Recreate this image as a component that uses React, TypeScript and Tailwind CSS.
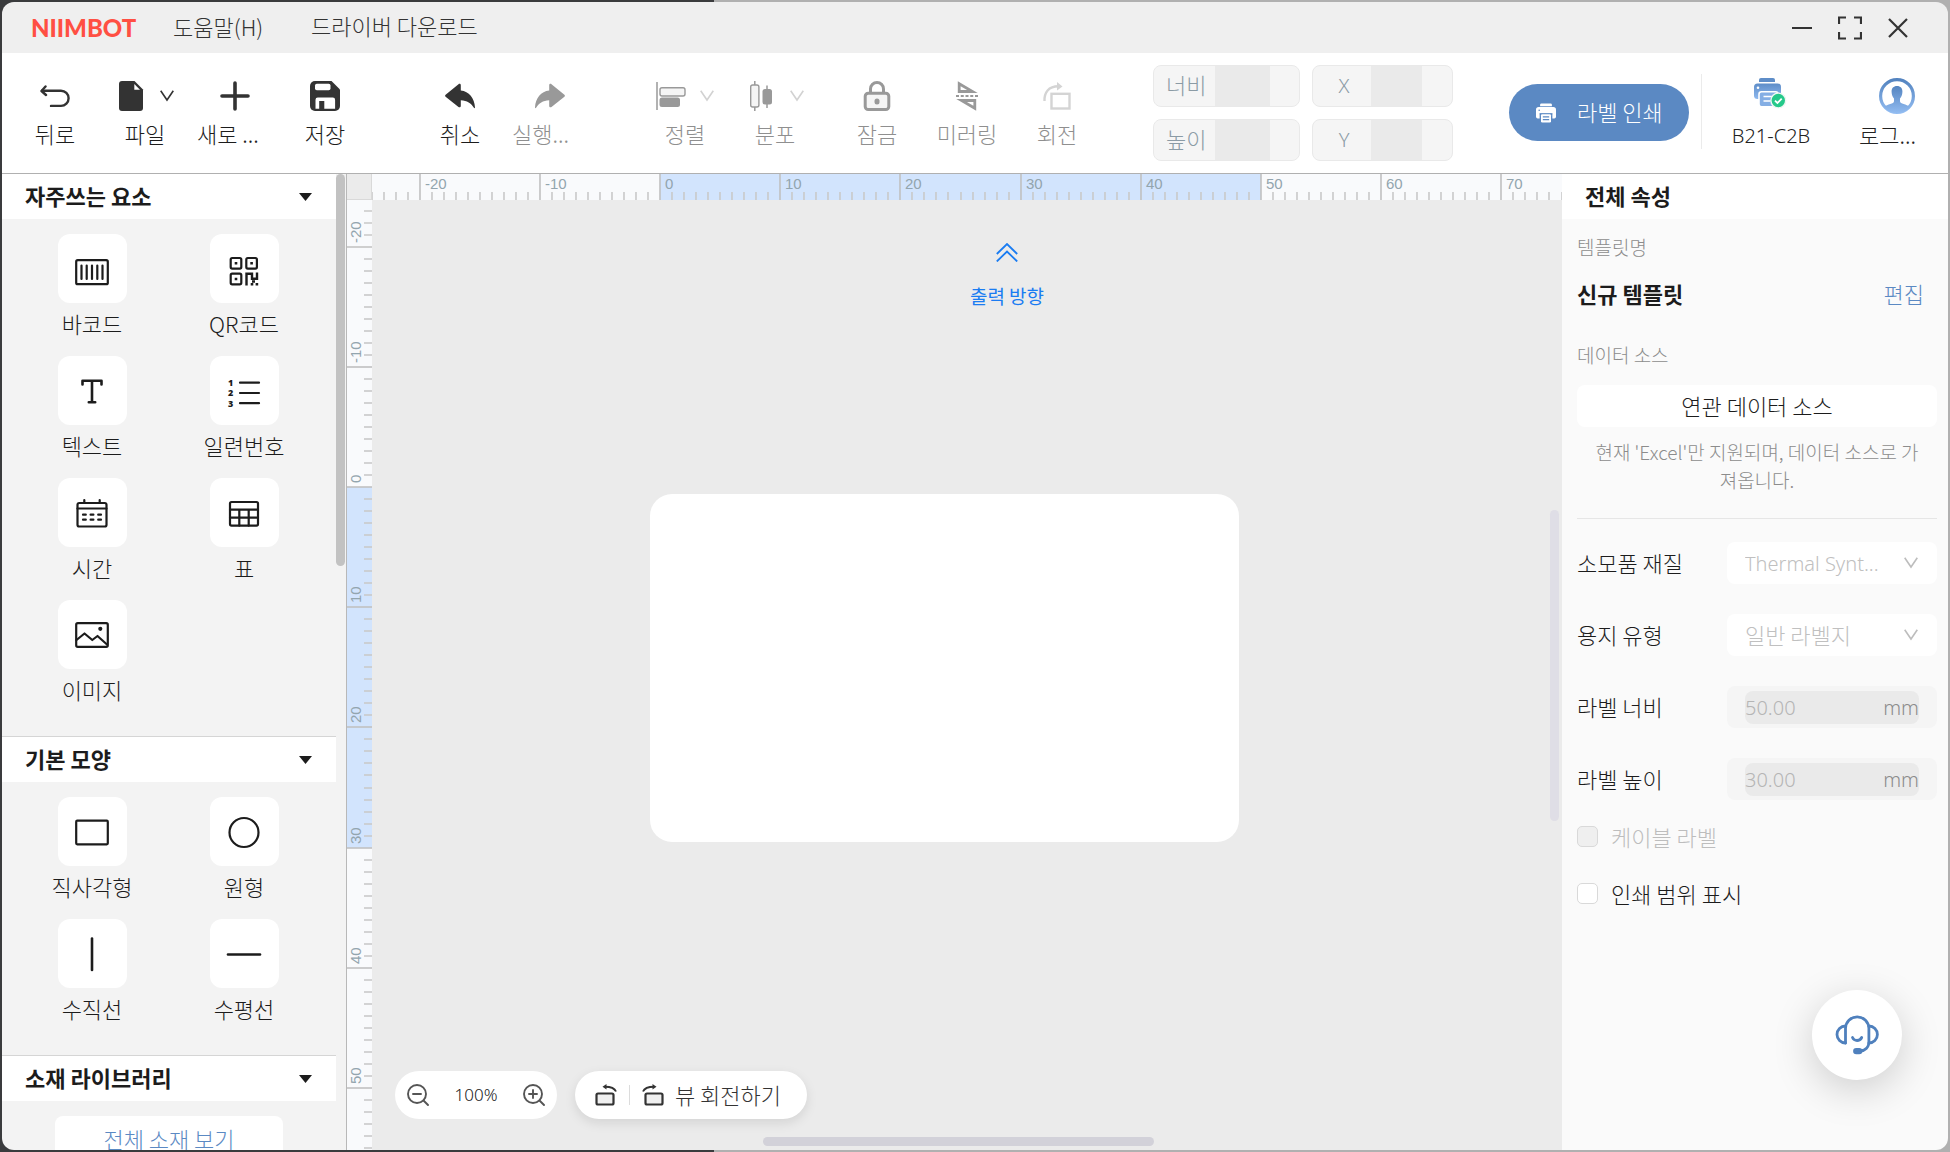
import type { ReactNode } from "react";

type IconProps = { className?: string };

const RULER_STEP = 12.02;

function BackIcon() {
  return (
    <svg width="30" height="30" viewBox="0 0 30 30" fill="none" stroke="currentColor" strokeWidth="2.4" strokeLinecap="round" strokeLinejoin="round">
      <path d="M5.5 5.5 1.5 10l4.5 4" />
      <path d="M2 9.7h19a7.6 7.6 0 0 1 0 15.2H11" />
    </svg>
  );
}

function FileIcon() {
  return (
    <svg width="30" height="30" viewBox="0 0 30 30" fill="currentColor">
      <path d="M6 0h12.5L27 8.5V27a3 3 0 0 1-3 3H6a3 3 0 0 1-3-3V3a3 3 0 0 1 3-3Z" />
      <path d="M18.3 3v5.7H24Z" fill="#fff" />
    </svg>
  );
}

function Chevron({ className }: IconProps) {
  return (
    <svg className={className} width="14" height="12" viewBox="0 0 14 12" fill="none" stroke="currentColor" strokeWidth="1.6">
      <path d="M.7.8 7 10 13.3.8" />
    </svg>
  );
}

function PlusIcon() {
  return (
    <svg width="30" height="30" viewBox="0 0 30 30" stroke="currentColor" strokeWidth="3.6" strokeLinecap="round">
      <path d="M15 2v26M2 15h26" />
    </svg>
  );
}

function SaveIcon() {
  return (
    <svg width="30" height="30" viewBox="0 0 30 30" fill="currentColor">
      <path d="M5 0h16.500L30 8.500V25a5 5 0 0 1-5 5H5a5 5 0 0 1-5-5V5a5 5 0 0 1 5-5Z" />
      <rect x="5" y="2.700" width="15.500" height="6.500" rx="1.800" fill="#fff" />
      <path d="M7.800 16.500h15a2.300 2.300 0 0 1 2.300 2.300v9H14.300V20H9.200v7.800H5.500v-9a2.300 2.300 0 0 1 2.300-2.300Z" fill="#fff" />
    </svg>
  );
}

function ReplyIcon({ className }: IconProps) {
  return (
    <svg className={className} width="30" height="30" viewBox="0 0 30 30" fill="currentColor">
      <path d="M13.500 3.200c1-.8 2.300-.2 2.300 1v5.400C24 10.500 29.500 17 30 26.600c0 .7-.8.8-1.100.2-2.600-4.700-6.800-7.300-13.100-7.600v5.800c0 1.200-1.300 1.800-2.300 1L.6 15.700a1.300 1.300 0 0 1 0-1.900Z" />
    </svg>
  );
}

function AlignIcon() {
  return (
    <svg width="30" height="30" viewBox="0 0 30 30" fill="none" stroke="currentColor">
      <path d="M1 1v28" strokeWidth="1.500" />
      <rect x="4" y="6.700" width="25" height="8.300" rx="2" fill="#f5f5f5" strokeWidth="1.400" />
      <rect x="3.500" y="16.500" width="20.500" height="9.500" rx="2.500" fill="currentColor" stroke="none" />
    </svg>
  );
}

function DistributeIcon() {
  return (
    <svg width="30" height="30" viewBox="0 0 30 30" fill="none" stroke="currentColor">
      <path d="M8.800 0v30M21 4.500v22.500" strokeWidth="1.500" />
      <rect x="4.700" y="4" width="8.200" height="22" rx="2" fill="#f5f5f5" strokeWidth="1.400" />
      <rect x="16.500" y="8" width="9.500" height="15.500" rx="2.500" fill="currentColor" stroke="none" />
    </svg>
  );
}

function LockIcon() {
  return (
    <svg width="30" height="30" viewBox="0 0 30 30" fill="none" stroke="currentColor" strokeWidth="3">
      <path d="M8.500 12V8a6.500 6.500 0 0 1 13 0v4" />
      <rect x="3.200" y="12.300" width="23.600" height="16.200" rx="3" fill="#f5f5f5" />
      <rect x="12.500" y="17.500" width="5" height="6" rx="2.500" fill="currentColor" stroke="none" />
    </svg>
  );
}

function MirrorIcon() {
  return (
    <svg width="30" height="30" viewBox="0 0 30 30" fill="none" stroke="currentColor" strokeWidth="2.800">
      <path d="M7.200 2.800v7.700h13.300Z" />
      <path d="M9.500 19.500h13.300v7.700Z" />
      <path d="M4 15h22" strokeWidth="2" strokeDasharray="3 1.750" />
    </svg>
  );
}

function RotateIcon() {
  return (
    <svg width="30" height="30" viewBox="0 0 30 30" fill="none" stroke="currentColor" strokeWidth="2.400">
      <path d="M2.500 20c-.4-8.500 4-14.700 14-14.700" />
      <path d="m15 1 5.500 4.500L15 9.500Z" fill="currentColor" stroke="none" />
      <rect x="9.500" y="12.800" width="18" height="14.700" />
    </svg>
  );
}

function PrintIcon() {
  return (
    <svg width="20" height="20" viewBox="0 0 22 21" fill="#fff">
      <path d="M6 0h10a1.500 1.500 0 0 1 1.500 1.500V3h-13V1.500A1.500 1.500 0 0 1 6 0Z" />
      <path d="M3 4h16a3 3 0 0 1 3 3v7.500a2 2 0 0 1-2 2h-2V11H4v5.500H2a2 2 0 0 1-2-2V7a3 3 0 0 1 3-3Z" />
      <rect x="5.500" y="11.500" width="11" height="9.500" rx="1.500" />
      <path d="M4 10.800h14v1H4ZM7.500 14.200h7v1.300h-7ZM7.500 17.200h7v1.300h-7Z" fill="#5b89c3" />
      <circle cx="3.500" cy="7.500" r=".9" fill="#5b89c3" />
    </svg>
  );
}

function DeviceIcon() {
  return (
    <svg width="36" height="36" viewBox="0 0 36 36">
      <defs>
        <linearGradient id="device" x1="0" y1="0" x2="0" y2="1">
          <stop offset="0" stopColor="#5e8dc8" />
          <stop offset="1" stopColor="#8fb9ef" />
        </linearGradient>
      </defs>
      <path d="M8 0h12a2 2 0 0 1 2 2v2H6V2a2 2 0 0 1 2-2Z" fill="#5e8dc8" />
      <rect x="1" y="5.500" width="27" height="15.500" rx="3.500" fill="url(#device)" />
      <circle cx="5" cy="9.700" r="1.300" fill="#fff" />
      <rect x="6" y="13.800" width="19" height="15" rx="2.500" fill="#84aee4" stroke="#fff" strokeWidth="1.600" />
      <path d="M10.500 18.500h10M10.500 23h7" stroke="#fff" strokeWidth="1.500" />
      <circle cx="25.300" cy="22.500" r="7.400" fill="#25c98a" stroke="#eef7f2" strokeWidth="1.400" />
      <path d="m22 22.700 2.400 2.300 4.300-4.300" fill="none" stroke="#fff" strokeWidth="1.800" />
    </svg>
  );
}

function AvatarIcon() {
  return (
    <svg width="36" height="36" viewBox="0 0 36 36">
      <defs>
        <linearGradient id="avatar" x1="0" y1="0" x2="0" y2="1">
          <stop offset="0" stopColor="#5484c0" />
          <stop offset="1" stopColor="#93bdf2" />
        </linearGradient>
        <clipPath id="avatar-clip">
          <circle cx="18" cy="18" r="17" />
        </clipPath>
      </defs>
      <circle cx="18" cy="18" r="16.400" fill="#fff" stroke="url(#avatar)" strokeWidth="3.200" />
      <path
        clipPath="url(#avatar-clip)"
        fill="url(#avatar)"
        d="M18 8c3.700 0 5.600 2.500 5.400 6-.1 2.900-1 5-2.400 6.500v2.800c0 2.800 6.500 2.700 10 5.700L28 36H8l-3-7c3.500-3 10-2.900 10-5.700v-2.800c-1.400-1.500-2.300-3.600-2.400-6.500C12.400 10.500 14.300 8 18 8Z"
      />
    </svg>
  );
}

function TileIcon({ children }: { children: ReactNode }) {
  return (
    <svg width="36" height="36" viewBox="0 0 36 36" fill="none" stroke="currentColor" strokeWidth="2.200" strokeLinecap="round" strokeLinejoin="round">
      {children}
    </svg>
  );
}

const elementTiles = [
  {
    label: "바코드",
    icon: (
      <TileIcon>
        <rect x="2.200" y="9.200" width="31.600" height="24" rx="1.500" />
        <path d="M7.500 14.500v13.500M12.700 14.500v13.500M18 14.500v13.500M23.300 14.500v13.500M28.500 14.500v13.500" />
      </TileIcon>
    ),
  },
  {
    label: "QR코드",
    icon: (
      <TileIcon>
        <rect x="4.700" y="7" width="10.600" height="10.600" rx="1.500" />
        <rect x="20.300" y="7" width="10.600" height="10.600" rx="1.500" />
        <rect x="4.700" y="22.700" width="10.600" height="10.600" rx="1.500" />
        <path d="M8.700 12.300h2.600M24.300 12.300h2.600M8.700 28h2.600" strokeLinecap="butt" strokeWidth="2.600" />
        <path d="M20.500 34.400V22.700h5.500v5h5V21.600M24.700 33.200h2.600M29.600 33.200h2.600M26 30.500h3" strokeLinecap="butt" strokeLinejoin="miter" strokeWidth="2.400" />
      </TileIcon>
    ),
  },
  {
    label: "텍스트",
    icon: (
      <TileIcon>
        <path d="M8.500 11.500V7.700h19v3.800M18 7.700v21.500M14.800 29.300h6.400" strokeWidth="2.600" />
      </TileIcon>
    ),
  },
  {
    label: "일련번호",
    icon: (
      <TileIcon>
        <path d="M14 9.700h19M14 20h19M14 30.200h19" />
        <g fill="currentColor" stroke="none" fontFamily="Open Sans" fontWeight="800" fontSize="9">
          <text x="2" y="12.500">1</text>
          <text x="2" y="23">2</text>
          <text x="2" y="33.500">3</text>
        </g>
      </TileIcon>
    ),
  },
  {
    label: "시간",
    icon: (
      <TileIcon>
        <rect x="3.500" y="8" width="29" height="23.500" rx="1.800" />
        <path d="M3.500 13.500h29M10.300 5v3M25.700 5v3" />
        <path d="M9 19.700h2.800M16.600 19.700h2.800M24.200 19.700H27M9 24.700h2.800M16.600 24.700h2.800M24.200 24.700H27" />
      </TileIcon>
    ),
  },
  {
    label: "표",
    icon: (
      <TileIcon>
        <rect x="4" y="7" width="28" height="23.600" rx="1.500" />
        <path d="M4 14.600h28M4 22.600h28M13.300 14.600v16M22.700 14.600v16" />
      </TileIcon>
    ),
  },
  {
    label: "이미지",
    icon: (
      <TileIcon>
        <rect x="2.200" y="6.200" width="31.600" height="23.600" rx="1.500" />
        <path d="m2.500 23 8-6.500 7.800 6.500 5.200-4 9.500 8.500" />
        <circle cx="26.300" cy="11.800" r="1" fill="currentColor" />
      </TileIcon>
    ),
  },
];

const shapeTiles = [
  {
    label: "직사각형",
    icon: (
      <TileIcon>
        <rect x="2.200" y="6.700" width="31.600" height="23.600" rx="1" />
      </TileIcon>
    ),
  },
  {
    label: "원형",
    icon: (
      <TileIcon>
        <circle cx="18" cy="18.500" r="14.500" />
      </TileIcon>
    ),
  },
  {
    label: "수직선",
    icon: (
      <TileIcon>
        <path d="M18 2.500v31.500" strokeWidth="2.600" />
      </TileIcon>
    ),
  },
  {
    label: "수평선",
    icon: (
      <TileIcon>
        <path d="M2 18.500h32" strokeWidth="2.600" />
      </TileIcon>
    ),
  },
];

function TitleBar() {
  return (
    <header className="flex h-[51px] shrink-0 items-center bg-[#efefef] pr-10 pl-[29px] text-[#333]">
      <span className="w-[142px] font-[Lato] text-[24px] font-black text-[#ff4f43]">NIIMBOT</span>
      <button className="w-[138px] pb-[2px] text-left">도움말(H)</button>
      <button className="pb-[5px]">드라이버 다운로드</button>
      <div className="ml-auto flex items-center gap-[26px]">
        <button aria-label="최소화">
          <svg width="20" height="24" viewBox="0 0 20 24" stroke="currentColor" strokeWidth="2.200">
            <path d="M0 12h20" />
          </svg>
        </button>
        <button aria-label="최대화">
          <svg width="24" height="24" viewBox="0 0 24 24" fill="none" stroke="currentColor" strokeWidth="2.200">
            <path d="M1 8V1.500h7M16 1.500h7V8M1 16v6.500h7M16 22.500h7V16" />
          </svg>
        </button>
        <button aria-label="닫기">
          <svg width="20" height="24" viewBox="0 0 20 24" stroke="currentColor" strokeWidth="2.200">
            <path d="m1 3 18 18M19 3 1 21" />
          </svg>
        </button>
      </div>
    </header>
  );
}

type ToolProps = {
  label: string;
  icon: ReactNode;
  menu?: boolean;
  disabled?: boolean;
  clipped?: boolean;
};

function Tool({ label, icon, menu, disabled, clipped }: ToolProps) {
  return (
    <button
      disabled={disabled}
      className={`flex w-[90px] flex-col items-center ${disabled ? "text-[#999]" : "text-[#333]"}`}
    >
      <span className="flex h-[30px] items-center gap-[14px]">
        {icon}
        {menu ? <Chevron className={disabled ? "text-[#d2d2d2]" : ""} /> : null}
      </span>
      <span className={`mt-2 leading-7 ${disabled ? "text-[#8f8f8f]" : "text-[#1c1c1c]"} ${clipped ? "w-[76px] text-left" : ""}`}>
        {label}
      </span>
    </button>
  );
}

function SizeField({ label, id }: { label: string; id: string }) {
  return (
    <div className="flex h-[42px] w-[147px] overflow-hidden rounded-lg border border-[#e9e9e9] bg-[#f5f5f5]">
      <label htmlFor={id} className="w-[61px] pl-3 leading-9 text-[#8b9ba5]">
        {label}
      </label>
      <input id={id} disabled className="w-[55px] bg-[#eaeaea]" />
    </div>
  );
}

function AxisField({ label, id }: { label: string; id: string }) {
  return (
    <div className="flex h-[42px] w-[141px] overflow-hidden rounded-lg border border-[#e9e9e9] bg-[#f5f5f5]">
      <label htmlFor={id} className="w-[58px] pl-1 text-center font-['Noto_Sans'] text-[20px] leading-10 text-[#8b9ba5]">
        {label}
      </label>
      <input id={id} disabled className="w-[51px] bg-[#eaeaea]" />
    </div>
  );
}

function Toolbar() {
  return (
    <div className="flex h-[121px] shrink-0 border-b border-[#b0b0b0] bg-white pr-[13px] pl-2">
      <div className="flex pt-[28px]">
        <Tool label="뒤로" icon={<BackIcon />} />
        <Tool label="파일" icon={<FileIcon />} menu />
        <Tool label="새로 ..." icon={<PlusIcon />} clipped />
        <Tool label="저장" icon={<SaveIcon />} />
      </div>
      <div className="ml-[45px] flex pt-[28px]">
        <Tool label="취소" icon={<ReplyIcon />} />
        <Tool label="실행..." icon={<ReplyIcon className="-scale-x-100" />} disabled clipped />
      </div>
      <div className="ml-[45px] flex pt-[28px]">
        <Tool label="정렬" icon={<AlignIcon />} menu disabled />
        <Tool label="분포" icon={<DistributeIcon />} menu disabled />
      </div>
      <div className="ml-3 flex pt-[28px]">
        <Tool label="잠금" icon={<LockIcon />} disabled />
        <Tool label="미러링" icon={<MirrorIcon />} disabled />
        <Tool
          label="회전"
          icon={
            <span className="text-[#d4d4d4]">
              <RotateIcon />
            </span>
          }
          disabled
        />
      </div>
      <div className="ml-[51px] grid grid-cols-[147px_141px] content-start gap-x-3 gap-y-3 pt-3">
        <SizeField label="너비" id="item-width" />
        <AxisField label="X" id="item-x" />
        <SizeField label="높이" id="item-height" />
        <AxisField label="Y" id="item-y" />
      </div>
      <div className="ml-auto flex">
        <button className="mt-[31px] flex h-[57px] w-[180px] items-center rounded-full bg-[#5b89c3] pl-[27px] text-white">
          <PrintIcon />
          <span className="ml-[21px] pb-[2px]">라벨 인쇄</span>
        </button>
        <div className="mt-[21px] ml-3 h-[75px] w-px bg-[#ebebeb]" />
        <button className="ml-6 flex w-[90px] flex-col items-center pt-[25px] text-[#222]">
          <DeviceIcon />
          <span className="mt-2 font-['Noto_Sans'] text-[20px] leading-7 whitespace-nowrap">B21-C2B</span>
        </button>
        <button className="ml-[43px] flex w-[76px] flex-col items-center pt-[25px] text-[#222]">
          <AvatarIcon />
          <span className="mt-[6px] w-full text-left leading-7">로그...</span>
        </button>
      </div>
    </div>
  );
}

function SectionHeader({ title }: { title: string }) {
  return (
    <h2>
      <button className="flex h-[45px] w-full items-center justify-between bg-white pr-6 pl-[23px] text-[#1c1c1c]">
        <span className="pb-[3px] font-bold">{title}</span>
        <svg width="13" height="8" viewBox="0 0 13 8" fill="currentColor">
          <path d="M0 0h13L6.500 8Z" />
        </svg>
      </button>
    </h2>
  );
}

function TileGrid({ tiles }: { tiles: { label: string; icon: ReactNode }[] }) {
  return (
    <div className="grid grid-cols-2 gap-y-[19px] pt-[15px] pr-4 pb-[33px] pl-[14px]">
      {tiles.map((tile) => (
        <button key={tile.label} className="flex flex-col items-center text-[#1c1c1c]">
          <span className="flex size-[69px] items-center justify-center rounded-xl bg-white">{tile.icon}</span>
          <span className="mt-[6px] leading-7">{tile.label}</span>
        </button>
      ))}
    </div>
  );
}

function Sidebar() {
  return (
    <aside className="flex w-[345px] shrink-0 border-r border-[#b8b8b8] bg-[#f3f3f3]">
      <div className="w-[334px] overflow-hidden">
        <SectionHeader title="자주쓰는 요소" />
        <TileGrid tiles={elementTiles} />
        <div className="border-t border-[#d5d5d5]" />
        <SectionHeader title="기본 모양" />
        <TileGrid tiles={shapeTiles} />
        <div className="border-t border-[#d5d5d5]" />
        <SectionHeader title="소재 라이브러리" />
        <div className="flex justify-center pt-[15px]">
          <button className="h-[48px] w-[228px] rounded-lg bg-white pb-[3px] text-[#5b89c3]">전체 소재 보기</button>
        </div>
      </div>
      <div className="h-[392px] w-[9px] rounded-full bg-[#c2c2c2]" />
    </aside>
  );
}

function rulerMarks(from: number, to: number) {
  return Array.from({ length: to - from + 1 }, (_, i) => from + i);
}

function TopRuler() {
  const at = (mm: number) => Math.round(288 + mm * RULER_STEP);
  return (
    <svg className="block h-[26px] w-full bg-[#f9fafc]" aria-hidden="true">
      <rect x={at(0)} y="0" width={at(50) - at(0)} height="26" fill="#d2e4fd" />
      {rulerMarks(-24, 90).map((mm) => (
        <path
          key={mm}
          d={`M${at(mm)} ${mm % 10 ? 18 : 0}V26`}
          stroke={mm % 10 ? "#c9c9c9" : "#c0c0c0"}
          strokeWidth="1.600"
        />
      ))}
      {rulerMarks(-2, 7).map((n) => (
        <text key={n} x={at(n * 10) + 5} y="15" fontSize="15" fill="#93a5ae" fontFamily="Liberation Sans">
          {n * 10}
        </text>
      ))}
    </svg>
  );
}

function SideRuler() {
  const at = (mm: number) => Math.round(287 + mm * RULER_STEP);
  return (
    <svg className="block h-full w-[25px] bg-[#f9fafc]" aria-hidden="true">
      <rect x="0" y={at(0)} width="25" height={at(30) - at(0)} fill="#d2e4fd" />
      {rulerMarks(-23, 90).map((mm) => (
        <path
          key={mm}
          d={`M${mm % 10 ? 17 : 0} ${at(mm)}H25`}
          stroke={mm % 10 ? "#c9c9c9" : "#c0c0c0"}
          strokeWidth="1.600"
        />
      ))}
      {rulerMarks(-2, 5).map((n) => (
        <text
          key={n}
          transform={`translate(14 ${at(n * 10) - 4}) rotate(-90)`}
          fontSize="15"
          fill="#93a5ae"
          fontFamily="Liberation Sans"
        >
          {n * 10}
        </text>
      ))}
    </svg>
  );
}

function ZoomGlyph({ plus }: { plus?: boolean }) {
  return (
    <svg width="22" height="22" viewBox="0 0 22 22" fill="none" stroke="currentColor" strokeWidth="1.900" strokeLinecap="round">
      <circle cx="10" cy="10" r="9" />
      <path d="m16.500 16.500 4.500 4.500M6 10h8" />
      {plus ? <path d="M10 6v8" /> : null}
    </svg>
  );
}

function TurnIcon({ className }: IconProps) {
  return (
    <svg className={className} width="22" height="22" viewBox="0 0 22 22" fill="none" stroke="currentColor" strokeWidth="2.200">
      <rect x="3.500" y="9.500" width="17" height="11" rx="1.500" fill="#f0f0f0" />
      <path d="M1 7.500C2.500 4 6.500 2.700 12 2.700" strokeWidth="1.900" />
      <path d="M10.500 0 14.500 2.800 10.500 5.600Z" fill="currentColor" stroke="none" />
    </svg>
  );
}

function Workspace() {
  return (
    <main className="grid min-w-0 flex-1 grid-cols-[25px_1fr] grid-rows-[26px_1fr] bg-[#ebebeb]">
      <div className="border-r border-b border-[#d9d9d9]" />
      <TopRuler />
      <div className="min-h-0 overflow-hidden">
        <SideRuler />
      </div>
      <div className="relative">
        <div className="absolute top-[43px] left-[635px] flex w-[80px] -translate-x-1/2 flex-col items-center text-[#1a7cf2]">
          <svg width="22" height="19" viewBox="0 0 22 19" fill="none" stroke="currentColor" strokeWidth="1.800">
            <path d="M.8 11 11 1l10.200 10M.8 18.500 11 8.500l10.200 10" />
          </svg>
          <span className="mt-5 text-[19px] leading-7 font-normal whitespace-nowrap">출력 방향</span>
        </div>
        <div className="absolute top-[294px] left-[278px] h-[348px] w-[589px] rounded-[22px] bg-white" />
        <div className="absolute bottom-[31px] left-[23px] flex gap-[18px]">
          <div className="flex h-[48px] w-[162px] items-center justify-between rounded-full bg-white px-3 text-[#555]">
            <button aria-label="축소">
              <ZoomGlyph />
            </button>
            <span className="font-['Noto_Sans'] text-[17px] text-[#222]">100%</span>
            <button aria-label="확대">
              <ZoomGlyph plus />
            </button>
          </div>
          <div className="flex h-[48px] w-[232px] items-center rounded-full bg-white pl-[20px] text-[#333] shadow-[0_4px_12px_rgba(0,0,0,0.1)]">
            <button aria-label="왼쪽으로 회전">
              <TurnIcon className="-scale-x-100" />
            </button>
            <span className="mr-3 ml-3 h-5 w-px bg-[#dcdcdc]" />
            <button className="flex items-center gap-[11px] whitespace-nowrap">
              <TurnIcon />
              <span className="pb-[2px]">뷰 회전하기</span>
            </button>
          </div>
        </div>
        <div className="absolute top-[310px] right-[3px] h-[311px] w-[9px] rounded-full bg-[#dfdee6]" />
        <div className="absolute bottom-1 left-[391px] h-[9px] w-[391px] rounded-full bg-[#d2d1d9]" />
      </div>
    </main>
  );
}

function SelectRow({ label, id, value, latin }: { label: string; id: string; value: string; latin?: boolean }) {
  return (
    <div className="flex h-[42px] items-center">
      <label htmlFor={id} className="w-[150px] pb-[2px]">
        {label}
      </label>
      <div className="relative flex-1">
        <select
          id={id}
          disabled
          className={`block h-[42px] w-full appearance-none rounded-lg bg-white pl-[18px] text-[#c0c0c0] opacity-100 ${latin ? "pt-[2px] font-['Noto_Sans'] text-[20px]" : "pb-[2px]"}`}
        >
          <option>{value}</option>
        </select>
        <Chevron className="pointer-events-none absolute top-[15px] right-[19px] text-[#bdbdbd]" />
      </div>
    </div>
  );
}

function SizeRow({ label, id, value }: { label: string; id: string; value: string }) {
  return (
    <div className="flex h-[42px] items-center">
      <label htmlFor={id} className="w-[150px] pb-[2px]">
        {label}
      </label>
      <div className="flex h-[42px] flex-1 items-center rounded-lg bg-[#f5f5f5] px-[18px] font-['Noto_Sans'] text-[20px]">
        <div className="flex h-[33px] w-full items-center justify-between rounded-lg bg-[#eaeaea] pt-[2px]">
          <input id={id} disabled value={value} readOnly className="w-[90px] text-[#b5b5b5]" />
          <span className="text-[#8c8c8c]">mm</span>
        </div>
      </div>
    </div>
  );
}

function Properties() {
  return (
    <aside className="relative w-[386px] shrink-0 bg-[#fafafa] text-[#1c1c1c]">
      <h2 className="flex h-[45px] items-center bg-white pb-[3px] pl-[23px] font-bold">전체 속성</h2>
      <div className="pr-[11px] pl-[15px]">
        <p className="pt-[14px] text-[19px] leading-7 text-[#8c8c8c]">템플릿명</p>
        <div className="mt-[18px] flex justify-between pr-[13px] leading-7">
          <span className="font-bold">신규 템플릿</span>
          <a href="#edit" className="text-[#5b89c3]">
            편집
          </a>
        </div>
        <p className="mt-[34px] text-[19px] leading-7 text-[#8c8c8c]">데이터 소스</p>
        <button className="mt-4 h-[42px] w-full rounded-lg bg-white pb-[2px]">연관 데이터 소스</button>
        <p className="mt-[11px] px-3 text-center text-[19px] leading-7 break-all text-[#8c8c8c]">
          현재 'Excel'만 지원되며, 데이터 소스로 가져옵니다.
        </p>
        <hr className="mt-6 border-[#e6e6e6]" />
        <div className="mt-[23px] flex flex-col gap-[30px]">
          <SelectRow label="소모품 재질" id="material" value="Thermal Synt..." latin />
          <SelectRow label="용지 유형" id="paper" value="일반 라벨지" />
          <SizeRow label="라벨 너비" id="label-width" value="50.00" />
          <SizeRow label="라벨 높이" id="label-height" value="30.00" />
        </div>
        <label className="mt-[22px] flex items-center gap-[13px] leading-7 text-[#bdbdbd]">
          <input type="checkbox" disabled className="size-[21px] appearance-none rounded-[5px] border border-[#d9d9d9] bg-[#efefef]" />
          케이블 라벨
        </label>
        <label className="mt-[29px] flex items-center gap-[13px] leading-7">
          <input type="checkbox" className="size-[21px] appearance-none rounded-[5px] border border-[#d9d9d9] bg-white" />
          인쇄 범위 표시
        </label>
      </div>
      <button
        aria-label="고객 지원"
        className="absolute right-[46px] bottom-[70px] flex size-[90px] items-center justify-center rounded-full bg-white shadow-[0_10px_40px_rgba(0,0,0,0.18)]"
      >
        <svg width="44" height="44" viewBox="0 0 44 44" fill="none" stroke="#4f80bd" strokeWidth="2.800" strokeLinecap="round">
          <path d="M10.500 30V15.500a11.700 11.700 0 0 1 23.400 0V29c0 5.500-4 8.500-8.500 9" />
          <path d="M10.500 13a8.500 8.500 0 0 0 0 17M33.900 13a8.500 8.500 0 0 1 0 17" />
          <path d="M17.500 24.500c1.800 4 7.200 4 9.200 0" />
          <rect x="19.500" y="36.300" width="6.500" height="3.600" rx="1.800" fill="#4f80bd" />
        </svg>
      </button>
    </aside>
  );
}

export default function App() {
  return (
    <div className="h-screen bg-[linear-gradient(90deg,#3a3b3d_36.6%,#b0b0b0_36.6%)] p-[2px] font-['Noto_Sans_CJK_KR',sans-serif] text-[22px] font-light">
      <div className="flex h-full flex-col overflow-hidden rounded-xl">
        <TitleBar />
        <Toolbar />
        <div className="flex min-h-0 flex-1">
          <Sidebar />
          <Workspace />
          <Properties />
        </div>
      </div>
    </div>
  );
}
